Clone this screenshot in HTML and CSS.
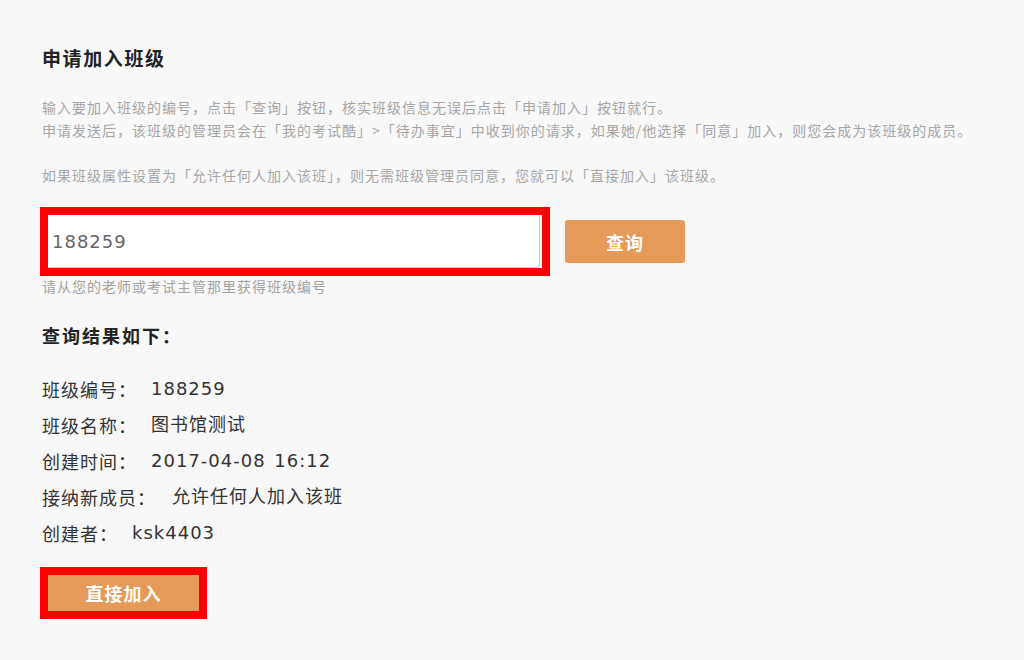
FILE: index.html
```html
<!DOCTYPE html>
<html lang="zh-CN">
<head>
<meta charset="utf-8">
<title>申请加入班级</title>
<link rel="stylesheet" href="styles.css">
</head>
<body>
<div class="page">
  <h1 class="title">申请加入班级</h1>
  <p class="desc">输入要加入班级的编号，点击「查询」按钮，核实班级信息无误后点击「申请加入」按钮就行。<br>申请发送后，该班级的管理员会在「我的考试酷」&gt;「待办事宜」中收到你的请求，如果她/他选择「同意」加入，则您会成为该班级的成员。</p>
  <p class="desc desc-second">如果班级属性设置为「允许任何人加入该班」，则无需班级管理员同意，您就可以「直接加入」该班级。</p>

  <div class="search-row">
    <div class="mark mark-input">
      <input class="code-input" type="text" value="188259">
    </div>
    <button class="btn btn-query" type="button">查询</button>
  </div>
  <div class="hint">请从您的老师或考试主管那里获得班级编号</div>

  <h2 class="result-title">查询结果如下：</h2>
  <ul class="info">
    <li class="info-row"><span class="label">班级编号：</span><span class="value">188259</span></li>
    <li class="info-row"><span class="label">班级名称：</span><span class="value">图书馆测试</span></li>
    <li class="info-row"><span class="label">创建时间：</span><span class="value">2017-04-08 16:12</span></li>
    <li class="info-row"><span class="label">接纳新成员：</span><span class="value value-wide">允许任何人加入该班</span></li>
    <li class="info-row"><span class="label">创建者：</span><span class="value">ksk4403</span></li>
  </ul>

  <div class="mark mark-join">
    <button class="btn btn-join" type="button">直接加入</button>
  </div>
</div>
</body>
</html>
```

FILE: styles.css
```css
html, body {
  margin: 0;
  padding: 0;
  background: #f8f8f8;
}

body {
  font-family: "Noto Sans CJK SC", "DejaVu Sans", sans-serif;
  color: #333;
}

.page {
  padding: 45px 0 0 42px;
}

.title {
  margin: 0;
  font-size: 19px;
  line-height: 26px;
  font-weight: bold;
  letter-spacing: 1.6px;
  color: #222;
}

.desc {
  margin: 25px 0 0 0;
  font-size: 14px;
  line-height: 23px;
  letter-spacing: 1px;
  color: #a6a6a6;
}

.desc-second {
  margin-top: 22px;
}

.search-row {
  display: flex;
  align-items: center;
  margin: 20px 0 0 -2px;
}

.mark {
  border: 8px solid #ff0000;
  box-sizing: border-box;
}

.mark-input {
  width: 510px;
  height: 69px;
  display: flex;
}

.code-input {
  box-sizing: border-box;
  width: 492px;
  height: 53px;
  margin: 0;
  padding: 0 0 0 4px;
  border: none;
  border-right: 1px solid #a9cbee;
  border-bottom: 1px solid #a9cbee;
  border-bottom-right-radius: 4px;
  background: #fff;
  font-family: "DejaVu Sans", sans-serif;
  font-size: 18px;
  letter-spacing: 1px;
  color: #666;
  outline: none;
}

.btn {
  border: none;
  margin: 0;
  padding: 0;
  background: #e59a59;
  color: #fff;
  font-family: "Noto Sans CJK SC", sans-serif;
  font-size: 18px;
  font-weight: bold;
  letter-spacing: 1px;
  cursor: pointer;
}

.btn-query {
  width: 120px;
  height: 43px;
  margin-left: 15px;
  border-radius: 3px;
}

.hint {
  font-size: 14px;
  line-height: 20px;
  letter-spacing: 1px;
  color: #a3a3a3;
}

.result-title {
  margin: 26px 0 0 0;
  font-size: 18px;
  line-height: 26px;
  font-weight: bold;
  letter-spacing: 2px;
  color: #222;
}

.info {
  list-style: none;
  margin: 23px 0 0 0;
  padding: 0;
}

.info-row {
  font-size: 18px;
  line-height: 36px;
  letter-spacing: 1px;
  color: #333;
  display: flex;
}

.value {
  margin-left: 14px;
  font-family: "DejaVu Sans", "Noto Sans CJK SC", sans-serif;
  word-spacing: 2px;
}

.value-wide {
  margin-left: 16px;
}

.mark-join {
  display: inline-flex;
  width: 167px;
  height: 52px;
  margin: 16px 0 0 -2px;
}

.btn-join {
  width: 151px;
  height: 36px;
}
```
